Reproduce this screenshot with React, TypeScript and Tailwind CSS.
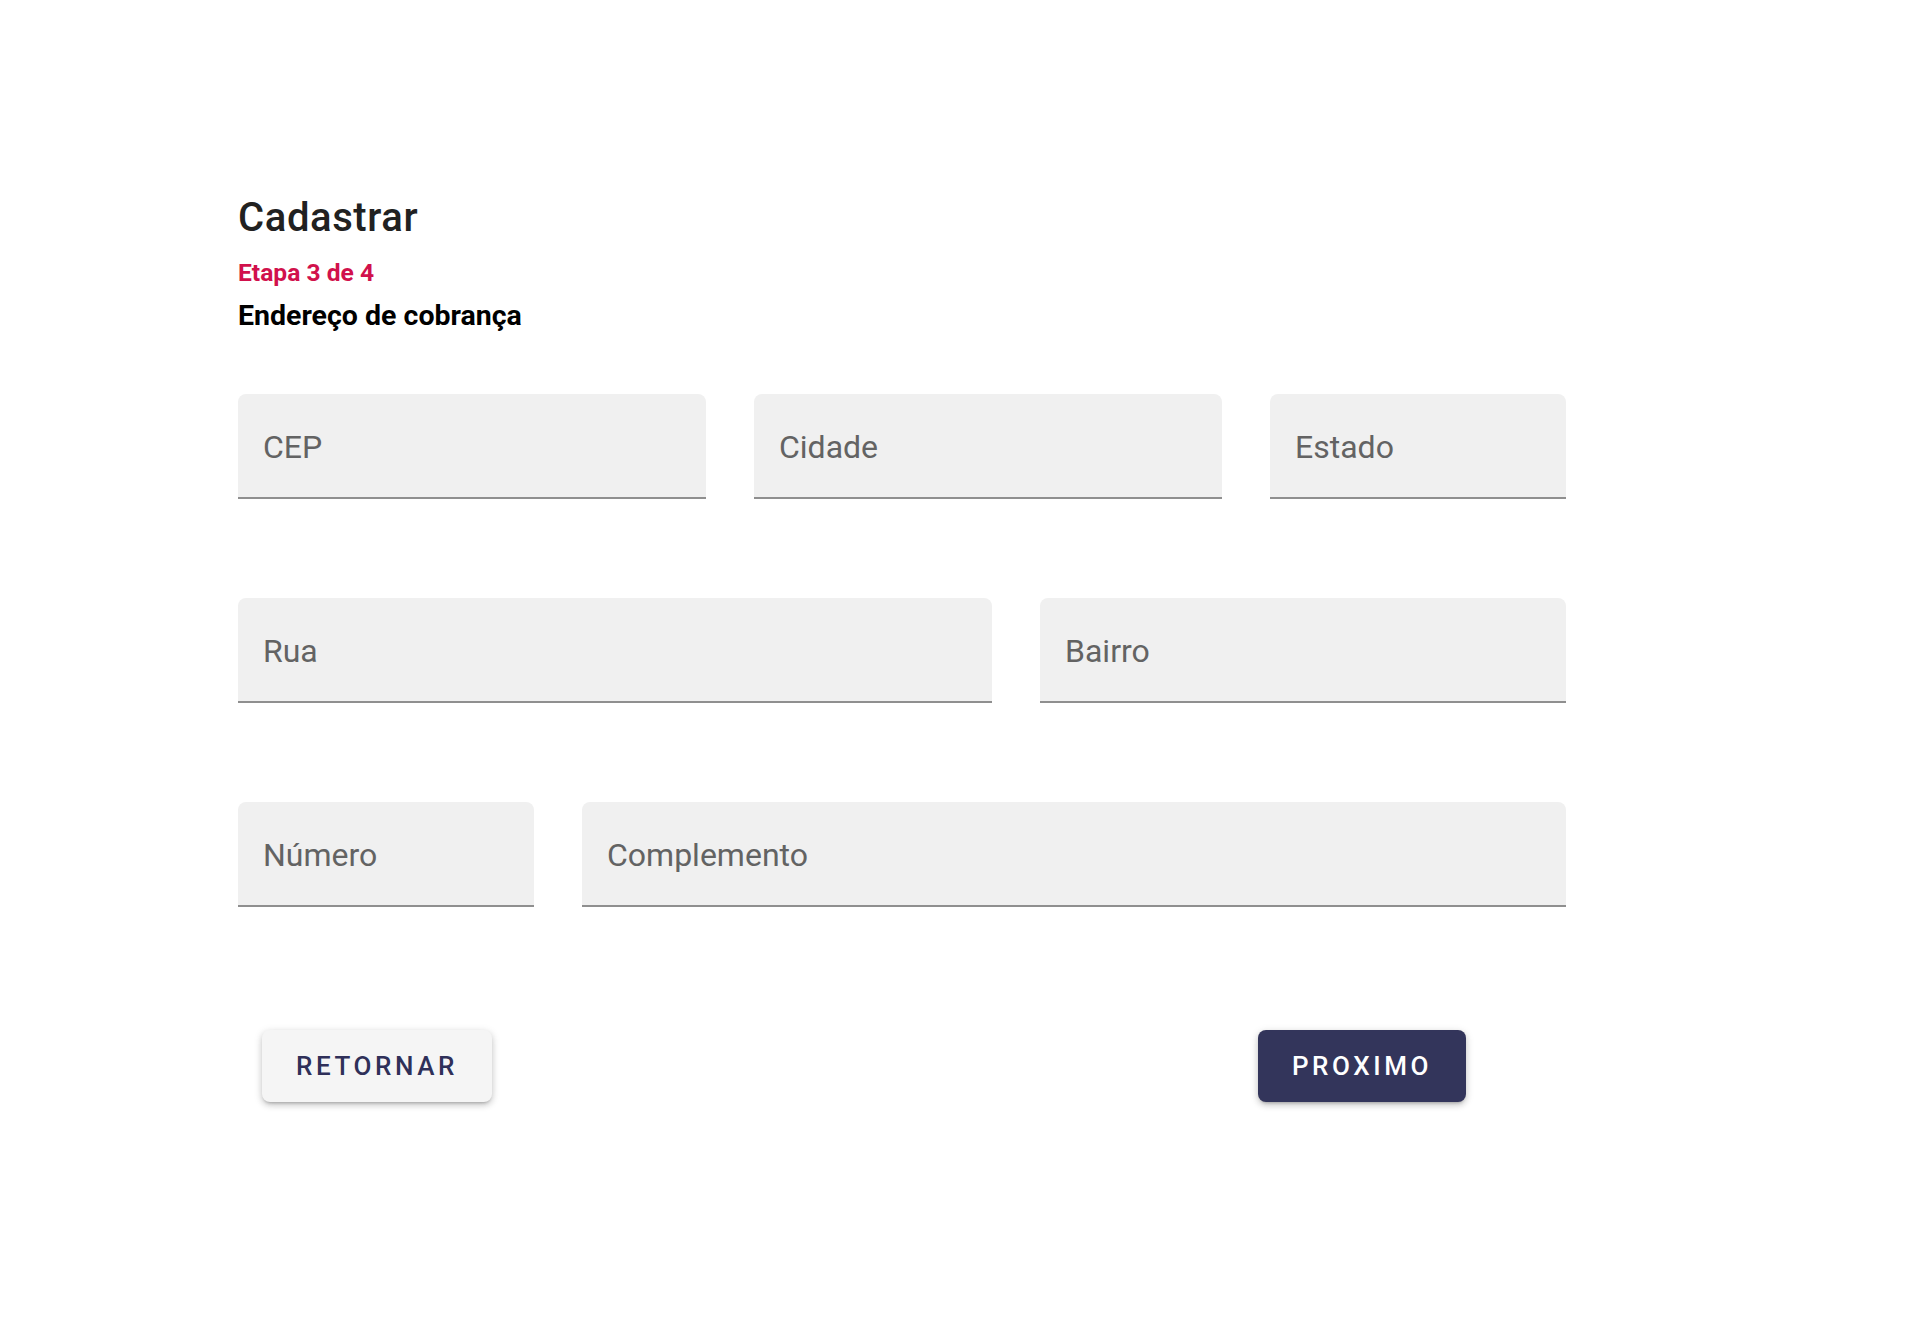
import React from "react";

function Field({ label }: { label: string }) {
  return (
    <div className="h-[105px] rounded-t-[8px] bg-[#f0f0f0] border-b-2 border-[#8f8f8f] flex items-center pl-[25px]">
      <span className="text-[32px] leading-none text-[#636363] pt-[2px]">{label}</span>
    </div>
  );
}

export default function App() {
  return (
    <div
      className="min-h-screen bg-white pt-[194px] pl-[238px]"
      style={{ fontFamily: "Roboto, 'Noto Sans', sans-serif" }}
    >
      <div className="w-[1328px]">
        {/* Header */}
        <h1 className="text-[40px] leading-[48px] font-medium tracking-[0.6px] text-[#212121]">Cadastrar</h1>
        <p className="mt-[15px] text-[24.6px] leading-[32px] font-bold text-[#d1114c]">Etapa 3 de 4</p>
        <h2 className="mt-[9px] text-[28.5px] leading-[36px] font-bold text-black">
          Endereço de cobrança
        </h2>

        {/* Form */}
        <div className="mt-[60px] flex flex-col gap-[99px]">
          <div className="grid grid-cols-[468px_468px_296px] gap-[48px]">
            <Field label="CEP" />
            <Field label="Cidade" />
            <Field label="Estado" />
          </div>
          <div className="grid grid-cols-[754px_526px] gap-[48px]">
            <Field label="Rua" />
            <Field label="Bairro" />
          </div>
          <div className="grid grid-cols-[296px_984px] gap-[48px]">
            <Field label="Número" />
            <Field label="Complemento" />
          </div>
        </div>

        {/* Buttons */}
        <div className="mt-[123px] flex justify-between pl-[24px] pr-[100px]">
          <button className="h-[72px] w-[230px] rounded-[8px] bg-[#f5f5f5] text-[26px] font-medium tracking-[3.6px] text-[#2f3059] shadow-[0_3px_3px_-2px_rgba(0,0,0,0.2),0_3px_6px_0_rgba(0,0,0,0.14),0_2px_10px_0_rgba(0,0,0,0.12)]">
            RETORNAR
          </button>
          <button className="h-[72px] w-[208px] rounded-[8px] bg-[#33355b] text-[26px] font-medium tracking-[3.6px] text-white shadow-[0_3px_3px_-2px_rgba(0,0,0,0.2),0_3px_6px_0_rgba(0,0,0,0.14),0_2px_10px_0_rgba(0,0,0,0.12)]">
            PROXIMO
          </button>
        </div>
      </div>
    </div>
  );
}
